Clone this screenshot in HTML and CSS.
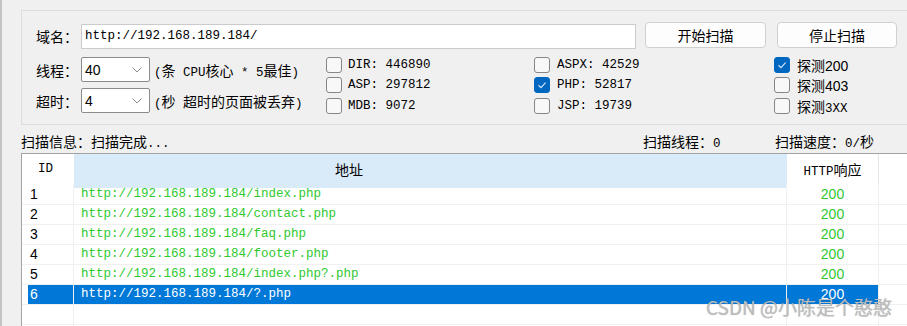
FILE: index.html
```html
<!DOCTYPE html>
<html>
<head>
<meta charset="utf-8">
<link rel="stylesheet" href="styles.css">
</head>
<body>
<div class="app">
  <div class="group">
    <div class="row-top">
      <span class="lbl">域名：</span>
      <div class="input">http://192.168.189.184/</div>
      <div class="btn btn-start">开始扫描</div>
      <div class="btn btn-stop">停止扫描</div>
    </div>
    <div class="lower">
      <div class="opts">
        <div class="opt-row">
          <span class="lbl">线程：</span>
          <div class="select"><span>40</span><svg class="chev" width="10" height="6" viewBox="0 0 10 6"><polyline points="0.5,0.5 5,5 9.5,0.5" fill="none" stroke="#8a8a8a" stroke-width="1"/></svg></div>
          <span class="hint"><span class="mono">(</span>条<span class="mono"> CPU</span>核心<span class="mono"> * 5</span>最佳<span class="mono">)</span></span>
        </div>
        <div class="opt-row">
          <span class="lbl">超时：</span>
          <div class="select"><span>4</span><svg class="chev" width="10" height="6" viewBox="0 0 10 6"><polyline points="0.5,0.5 5,5 9.5,0.5" fill="none" stroke="#8a8a8a" stroke-width="1"/></svg></div>
          <span class="hint"><span class="mono">(</span>秒<span class="mono"> </span>超时的页面被丢弃<span class="mono">)</span></span>
        </div>
      </div>
      <div class="chk-col col1">
        <div class="chk"><span class="box"></span><span class="mono">DIR: 446890</span></div>
        <div class="chk"><span class="box"></span><span class="mono">ASP: 297812</span></div>
        <div class="chk"><span class="box"></span><span class="mono">MDB: 9072</span></div>
      </div>
      <div class="chk-col col2">
        <div class="chk"><span class="box"></span><span class="mono">ASPX: 42529</span></div>
        <div class="chk"><span class="box on"><svg width="14" height="14" viewBox="0 0 14 14"><polyline points="3.5,7.2 6,9.6 10.6,4.6" fill="none" stroke="#cfe3f7" stroke-width="1.2"/></svg></span><span class="mono">PHP: 52817</span></div>
        <div class="chk"><span class="box"></span><span class="mono">JSP: 19739</span></div>
      </div>
      <div class="chk-col col3">
        <div class="chk"><span class="box on"><svg width="14" height="14" viewBox="0 0 14 14"><polyline points="3.5,7.2 6,9.6 10.6,4.6" fill="none" stroke="#cfe3f7" stroke-width="1.2"/></svg></span><span>探测<span class="num">200</span></span></div>
        <div class="chk"><span class="box"></span><span>探测<span class="num">403</span></span></div>
        <div class="chk"><span class="box"></span><span>探测<span class="mono">3XX</span></span></div>
      </div>
    </div>
  </div>

  <div class="status">
    <span>扫描信息：扫描完成<span class="mono">...</span></span>
    <span>扫描线程：<span class="mono">0</span></span>
    <span>扫描速度：<span class="mono">0/</span>秒</span>
  </div>

  <div class="table">
    <div class="thead">
      <div class="th th-id mono">ID</div>
      <div class="th th-url">地址</div>
      <div class="th th-code"><span class="mono">HTTP</span>响应</div>
      <div class="th th-rest"></div>
    </div>
    <div class="tr"><div class="td td-id"><span class="idv">1</span></div><div class="td td-url">http://192.168.189.184/index.php</div><div class="td td-code">200</div><div class="td td-rest"></div></div>
    <div class="tr"><div class="td td-id"><span class="idv">2</span></div><div class="td td-url">http://192.168.189.184/contact.php</div><div class="td td-code">200</div><div class="td td-rest"></div></div>
    <div class="tr"><div class="td td-id"><span class="idv">3</span></div><div class="td td-url">http://192.168.189.184/faq.php</div><div class="td td-code">200</div><div class="td td-rest"></div></div>
    <div class="tr"><div class="td td-id"><span class="idv">4</span></div><div class="td td-url">http://192.168.189.184/footer.php</div><div class="td td-code">200</div><div class="td td-rest"></div></div>
    <div class="tr"><div class="td td-id"><span class="idv">5</span></div><div class="td td-url">http://192.168.189.184/index.php?.php</div><div class="td td-code">200</div><div class="td td-rest"></div></div>
    <div class="tr selected"><div class="td td-id"><span class="idv">6</span></div><div class="td td-url">http://192.168.189.184/?.php</div><div class="td td-code">200</div><div class="td td-rest"></div></div>
    <div class="tr"><div class="td td-id"><span class="idv"></span></div><div class="td td-url"></div><div class="td td-code"></div><div class="td td-rest"></div></div>
    <div class="tr"><div class="td td-id"><span class="idv"></span></div><div class="td td-url"></div><div class="td td-code"></div><div class="td td-rest"></div></div>
  </div>
</div>
<div class="watermark">CSDN @小陈是个憨憨</div>
</body>
</html>
```
FILE: styles.css
```css
* { box-sizing: border-box; }
html, body { margin: 0; padding: 0; }
body {
  width: 907px;
  height: 326px;
  overflow: hidden;
  background: #f0f0f0;
  position: relative;
  font-family: "Noto Sans CJK SC", "Noto Sans", sans-serif;
  font-size: 14px;
  color: #000;
}
.app {
  height: 326px;
  border-left: 2px solid #c4c4c4;
  padding: 10px 0 0 19px;
}
.mono { font-family: "Liberation Mono", monospace; font-size: 12.5px; }
.num { font-family: "Liberation Sans", sans-serif; font-size: 14px; }

.group {
  width: 1000px;
  height: 115px;
  border: 1px solid #dcdcdc;
  border-right: none;
  padding: 12px 0 0 14px;
}
.row-top { display: flex; align-items: center; height: 26px; }
.lbl { width: 45px; flex: none; line-height: 20px; }
.input {
  width: 555px;
  height: 25px;
  border: 1px solid #cbcbcb;
  background: #fff;
  padding-left: 3px;
  font-family: "Liberation Mono", monospace;
  font-size: 12.5px;
  line-height: 23px;
  flex: none;
}
.btn {
  flex: none;
  height: 26px;
  margin-left: 9px;
  width: 121px;
  border: 1px solid #d0d0d0;
  border-radius: 4px;
  background: #fdfdfd;
  text-align: center;
  line-height: 24px;
  position: relative;
  top: -1px;
}
.btn-stop { margin-left: 11px; width: 120px; }

.lower { display: flex; margin-top: 8px; }
.opts { width: 290px; flex: none; display: flex; flex-direction: column; gap: 6px; }
.opt-row { display: flex; align-items: center; height: 25px; }
.select {
  flex: none;
  width: 69px;
  height: 25px;
  border: 1px solid #8b8b8b;
  border-radius: 2px;
  background: #fff;
  display: flex;
  align-items: center;
  padding-left: 3px;
  font-family: "Liberation Sans", sans-serif;
  font-size: 14px;
}
.chev { margin-left: auto; margin-right: 7px; }
.hint { margin-left: 4px; white-space: nowrap; }

.chk-col {
  flex: none;
  display: grid;
  grid-template-rows: 20px 21px 20px;
  align-items: start;
}
.col1 { width: 208px; }
.col2 { width: 240px; }
.chk { display: flex; align-items: center; height: 16px; white-space: nowrap; }
.box {
  flex: none;
  width: 16px;
  height: 16px;
  border: 1px solid #868686;
  border-radius: 3px;
  background: #f8f8f8;
  margin-right: 6px;
  display: flex;
  align-items: center;
  justify-content: center;
}
.col2 .box, .col3 .box { margin-right: 7px; }
.box.on { background: #0067c0; border-color: #0067c0; }

.status {
  display: grid;
  grid-template-columns: 622px 132px auto;
  height: 20px;
  margin-top: 6px;
  line-height: 20px;
  white-space: nowrap;
}

.table {
  margin-top: 2px;
  width: 1000px;
  height: 200px;
  border: 1px solid #a3a3a3;
  border-right: none;
  border-bottom: none;
  background: #fff;
}
.thead, .tr {
  display: grid;
  grid-template-columns: 52px 713px 92px 1fr;
}
.thead { height: 31px; }
.th { line-height: 31px; white-space: nowrap; }
.th-id { padding-left: 16px; }
.th-url { background: #d9ebf9; padding-left: 261px; }
.th-code { text-align: center; border-right: 1px solid #e5e5e5; }

.tr { height: 20px; border-bottom: 1px solid #f0f0f0; }
.td { height: 19px; line-height: 19px; white-space: nowrap; border-right: 1px solid #f0f0f0; }
.td-rest { border-right: none; }
.td-id { padding-left: 6px; font-family: "Liberation Sans", sans-serif; font-size: 14px; }
.idv { display: block; height: 19px; padding-left: 2px; }
.td-url {
  padding-left: 7px;
  font-family: "Liberation Mono", monospace;
  font-size: 12.5px;
  color: #2fc92f;
}
.td-code {
  text-align: center;
  font-family: "Liberation Sans", sans-serif;
  font-size: 14px;
  color: #2fc92f;
}
.tr.selected .idv,
.tr.selected .td-url,
.tr.selected .td-code { background: #0078d7; color: #fff; }

.watermark {
  position: absolute;
  right: 15px;
  bottom: 8px;
  font-family: "Noto Sans CJK SC", "Noto Sans", sans-serif;
  font-size: 19px;
  line-height: 22px;
  color: #bdbdbd;
  text-shadow: 0 0 1px rgba(90, 90, 90, 0.45);
  white-space: nowrap;
}
```
